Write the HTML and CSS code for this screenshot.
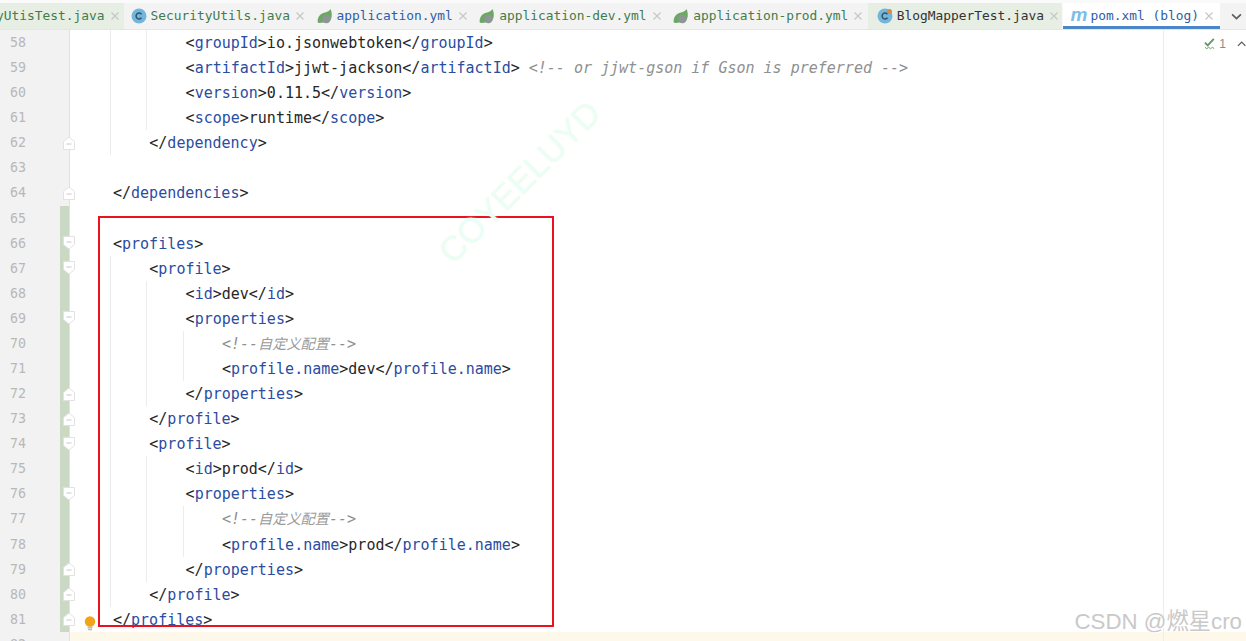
FILE: index.html
```html
<!DOCTYPE html>
<html lang="en">
<head>
<meta charset="utf-8">
<title>pom.xml (blog)</title>
<link rel="stylesheet" href="styles.css">
</head>
<body>
<svg class="defs" aria-hidden="true">
  <symbol id="close" viewBox="0 0 8 8"><path d="M.5.5l7 7M7.5.5l-7 7" fill="none" stroke="#c4c6c4" stroke-width="1.1"/></symbol>
  <symbol id="spring" viewBox="0 0 16 16"><path d="M.8 14.800C0 9.500 3 5.500 8 4.500c2.500-.5 4.500-1.500 5.500-3.500 1.500 3.500 1.800 7 .5 10-1 2.500-4 4-7 3.500-2.500.3-4.500.6-6.200.3z" fill="#6ea765"/><circle cx="9.500" cy="11" r="4.200" fill="#8e9596"/></symbol>
  <symbol id="cls" viewBox="0 0 16 16"><circle cx="8" cy="8" r="7.500" fill="#72b6dc"/><path d="M10.500 6.200A3 3 0 1 0 10.500 9.800" fill="none" stroke="#33526a" stroke-width="1.500"/></symbol>
  <symbol id="fold-start" viewBox="0 0 12 14"><path d="M.5.500h11v8L6 13 .5 8.500z" fill="#fff" stroke="#e2e2e2"/><path d="M3.500 6h5" stroke="#c8c8c8"/></symbol>
  <symbol id="fold-end" viewBox="0 0 12 14"><path d="M.5 13.500h11v-8L6 1 .5 5.500z" fill="#fff" stroke="#e2e2e2"/><path d="M3.500 8h5" stroke="#c8c8c8"/></symbol>
</svg>

<div class="tabbar">
  <div class="tab tab-seen tab-first"><span class="label green clip">yUtisTest.java</span><svg class="x"><use href="#close"/></svg></div>
  <div class="tab"><svg class="ico"><use href="#cls"/></svg><span class="label green">SecurityUtils.java</span><svg class="x"><use href="#close"/></svg></div>
  <div class="tab"><svg class="ico"><use href="#spring"/></svg><span class="label blue">application.yml</span><svg class="x"><use href="#close"/></svg></div>
  <div class="tab"><svg class="ico"><use href="#spring"/></svg><span class="label green">application-dev.yml</span><svg class="x"><use href="#close"/></svg></div>
  <div class="tab"><svg class="ico"><use href="#spring"/></svg><span class="label green">application-prod.yml</span><svg class="x"><use href="#close"/></svg></div>
  <div class="tab tab-seen tab-blog"><span class="ico-wrap"><svg class="ico"><use href="#cls"/></svg><span class="dot"></span></span><span class="label dark">BlogMapperTest.java</span><svg class="x"><use href="#close"/></svg></div>
  <div class="tab tab-active"><span class="m-ico">m</span><span class="label blue">pom.xml (blog)</span><svg class="x"><use href="#close"/></svg></div>
  <div class="tab-more"><svg class="chev" viewBox="0 0 10 6"><path d="M1 1l4 4 4-4" fill="none" stroke="#5c5c5c" stroke-width="1.500"/></svg></div>
</div>

<div class="editor">
  <div class="lines">
    <div class="row"><div class="gutter"><span class="num">58</span><span class="strip"></span></div><div class="code"><span class="ind g"></span><span class="ind g"></span><span class="txt">&lt;<b>groupId</b>&gt;io.jsonwebtoken&lt;/<b>groupId</b>&gt;</span></div></div>
    <div class="row"><div class="gutter"><span class="num">59</span><span class="strip"></span></div><div class="code"><span class="ind g"></span><span class="ind g"></span><span class="txt">&lt;<b>artifactId</b>&gt;jjwt-jackson&lt;/<b>artifactId</b>&gt; <i>&lt;!-- or jjwt-gson if Gson is preferred --&gt;</i></span></div></div>
    <div class="row"><div class="gutter"><span class="num">60</span><span class="strip"></span></div><div class="code"><span class="ind g"></span><span class="ind g"></span><span class="txt">&lt;<b>version</b>&gt;0.11.5&lt;/<b>version</b>&gt;</span></div></div>
    <div class="row"><div class="gutter"><span class="num">61</span><span class="strip"></span></div><div class="code"><span class="ind g"></span><span class="ind g"></span><span class="txt">&lt;<b>scope</b>&gt;runtime&lt;/<b>scope</b>&gt;</span></div></div>
    <div class="row"><div class="gutter"><span class="num">62</span><span class="strip"><svg class="fold"><use href="#fold-end"/></svg></span></div><div class="code"><span class="ind g"></span><span class="txt">&lt;/<b>dependency</b>&gt;</span></div></div>
    <div class="row"><div class="gutter"><span class="num">63</span><span class="strip"></span></div><div class="code"></div></div>
    <div class="row"><div class="gutter"><span class="num">64</span><span class="strip"><svg class="fold"><use href="#fold-end"/></svg></span></div><div class="code"><span class="txt">&lt;/<b>dependencies</b>&gt;</span></div></div>
    <div class="row"><div class="gutter"><span class="num">65</span><span class="strip changed"></span></div><div class="code"></div></div>
    <div class="row"><div class="gutter"><span class="num">66</span><span class="strip changed"><svg class="fold"><use href="#fold-start"/></svg></span></div><div class="code"><span class="txt">&lt;<b>profiles</b>&gt;</span></div></div>
    <div class="row"><div class="gutter"><span class="num">67</span><span class="strip changed"><svg class="fold"><use href="#fold-start"/></svg></span></div><div class="code"><span class="ind g"></span><span class="txt">&lt;<b>profile</b>&gt;</span></div></div>
    <div class="row"><div class="gutter"><span class="num">68</span><span class="strip changed"></span></div><div class="code"><span class="ind g"></span><span class="ind g"></span><span class="txt">&lt;<b>id</b>&gt;dev&lt;/<b>id</b>&gt;</span></div></div>
    <div class="row"><div class="gutter"><span class="num">69</span><span class="strip changed"><svg class="fold"><use href="#fold-start"/></svg></span></div><div class="code"><span class="ind g"></span><span class="ind g"></span><span class="txt">&lt;<b>properties</b>&gt;</span></div></div>
    <div class="row"><div class="gutter"><span class="num">70</span><span class="strip changed"></span></div><div class="code"><span class="ind g"></span><span class="ind g"></span><span class="ind g"></span><span class="txt"><i>&lt;!--<span class="cjk">自定义配置</span>--&gt;</i></span></div></div>
    <div class="row"><div class="gutter"><span class="num">71</span><span class="strip changed"></span></div><div class="code"><span class="ind g"></span><span class="ind g"></span><span class="ind g"></span><span class="txt">&lt;<b>profile.name</b>&gt;dev&lt;/<b>profile.name</b>&gt;</span></div></div>
    <div class="row"><div class="gutter"><span class="num">72</span><span class="strip changed"><svg class="fold"><use href="#fold-end"/></svg></span></div><div class="code"><span class="ind g"></span><span class="ind g"></span><span class="txt">&lt;/<b>properties</b>&gt;</span></div></div>
    <div class="row"><div class="gutter"><span class="num">73</span><span class="strip changed"><svg class="fold"><use href="#fold-end"/></svg></span></div><div class="code"><span class="ind g"></span><span class="txt">&lt;/<b>profile</b>&gt;</span></div></div>
    <div class="row"><div class="gutter"><span class="num">74</span><span class="strip changed"><svg class="fold"><use href="#fold-start"/></svg></span></div><div class="code"><span class="ind g"></span><span class="txt">&lt;<b>profile</b>&gt;</span></div></div>
    <div class="row"><div class="gutter"><span class="num">75</span><span class="strip changed"></span></div><div class="code"><span class="ind g"></span><span class="ind g"></span><span class="txt">&lt;<b>id</b>&gt;prod&lt;/<b>id</b>&gt;</span></div></div>
    <div class="row"><div class="gutter"><span class="num">76</span><span class="strip changed"><svg class="fold"><use href="#fold-start"/></svg></span></div><div class="code"><span class="ind g"></span><span class="ind g"></span><span class="txt">&lt;<b>properties</b>&gt;</span></div></div>
    <div class="row"><div class="gutter"><span class="num">77</span><span class="strip changed"></span></div><div class="code"><span class="ind g"></span><span class="ind g"></span><span class="ind g"></span><span class="txt"><i>&lt;!--<span class="cjk">自定义配置</span>--&gt;</i></span></div></div>
    <div class="row"><div class="gutter"><span class="num">78</span><span class="strip changed"></span></div><div class="code"><span class="ind g"></span><span class="ind g"></span><span class="ind g"></span><span class="txt">&lt;<b>profile.name</b>&gt;prod&lt;/<b>profile.name</b>&gt;</span></div></div>
    <div class="row"><div class="gutter"><span class="num">79</span><span class="strip changed"><svg class="fold"><use href="#fold-end"/></svg></span></div><div class="code"><span class="ind g"></span><span class="ind g"></span><span class="txt">&lt;/<b>properties</b>&gt;</span></div></div>
    <div class="row"><div class="gutter"><span class="num">80</span><span class="strip changed"><svg class="fold"><use href="#fold-end"/></svg></span></div><div class="code"><span class="ind g"></span><span class="txt">&lt;/<b>profile</b>&gt;</span></div></div>
    <div class="row"><div class="gutter"><span class="num">81</span><span class="strip changed"><svg class="fold"><use href="#fold-end"/></svg></span></div><div class="code"><span class="txt">&lt;/<b>profiles</b>&gt;</span></div></div>
    <div class="row row-current"><div class="gutter"><span class="num">82</span><span class="strip"></span></div><div class="code"></div></div>
  </div>
  <div class="stripe">
    <div class="inspect">
      <svg class="inspect-ico" viewBox="0 0 12 12"><path d="M1 4.500l3 3L10.500.5" fill="none" stroke="#5d9b62" stroke-width="2"/><path d="M1 9.500l2 1.500 2-1.500 2 1.500 2-1.500 2 1.500" fill="none" stroke="#5d9b62"/></svg>
      <span class="inspect-count">1</span>
      <svg class="inspect-up" viewBox="0 0 10 6"><path d="M1 5l4-4 4 4" fill="none" stroke="#5c5c5c" stroke-width="1.400"/></svg>
    </div>
    <div class="stripe-current"></div>
  </div>

  <div class="bulb"><svg viewBox="0 0 12 16" width="12" height="16"><circle cx="6" cy="5.500" r="5.200" fill="#f2a416"/><path d="M3.500 11.500h5M4 13.500h4" stroke="#b9b9b9" stroke-width="1.500"/></svg></div>
  <div class="red-box"></div>
  <div class="mark-cove">COYEELUYD</div>
</div>
<div class="mark-csdn">CSDN @燃星cro</div>
</body>
</html>
```

FILE: styles.css
```css
* { box-sizing: border-box; }

html, body {
  margin: 0;
  width: 1246px;
  height: 641px;
  overflow: hidden;
  background: #fff;
}

body {
  position: relative;
  font-family: "DejaVu Sans Mono", "Noto Sans CJK SC", monospace;
}

.defs { display: none; }

.tabbar {
  display: flex;
  height: 30px;
  padding-top: 3px;
  background: #fafafa;
  border-bottom: 1px solid #e6e6e6;
  overflow: hidden;
}

.tab {
  display: flex;
  flex: none;
  align-items: center;
  height: 26px;
  padding: 0 5.500px 0 7px;
  background: #f3f3f3;
}

.tab-seen { background: #e7eee3; }

.tab-first { padding: 0 5px 0 0; }

.tab-blog { padding: 0 4.500px 0 9px; }

.tab-active {
  height: 26px;
  padding-right: 7px;
  background: #fff;
  box-shadow: inset 0 -3px 0 #4a86c8;
  margin-left: 1px;
}

.tab-more {
  display: flex;
  flex: 1;
  align-items: center;
  justify-content: flex-end;
  height: 26px;
  padding-right: 4px;
  background: #f3f3f3;
}

.chev { width: 11px; height: 7px; }

.label {
  margin-top: -2px;
  font-size: 12.880px;
  white-space: pre;
  letter-spacing: 0;
}

.clip { margin-left: -4px; }

.green { color: #3f7d4c; }
.blue { color: #2f5da6; }
.dark { color: #333; }

.ico {
  flex: none;
  width: 16px;
  height: 16px;
  margin-top: -1px;
  margin-right: 4px;
}

.ico-wrap {
  position: relative;
  display: flex;
  flex: none;
}

.dot {
  position: absolute;
  top: 0;
  left: 10px;
  width: 5px;
  height: 5px;
  border-radius: 50%;
  background: #d98a4a;
}

.m-ico {
  flex: none;
  width: 20px;
  margin-top: -3px;
  font: italic bold 19px/20px "Liberation Sans", sans-serif;
  color: #7cbde8;
}

.x {
  flex: none;
  width: 8px;
  height: 8px;
  margin-left: 6px;
  margin-top: -1px;
}

.editor {
  position: relative;
  display: flex;
  height: 611px;
  overflow: hidden;
}

.lines {
  flex: 1;
  min-width: 0;
}

.row {
  display: flex;
  height: 25.09px;
  font-size: 15px;
  line-height: 25.09px;
}

.gutter {
  display: flex;
  flex: none;
  width: 70px;
  background: #f2f2f2;
  border-right: 1px solid #e2e2e2;
}

.num {
  flex: none;
  width: 60px;
  padding-right: 34px;
  font-size: 13.300px;
  text-align: right;
  color: #b8b8b8;
}

.strip {
  display: flex;
  flex: none;
  align-items: center;
  width: 9px;
}

.changed { background: #c9d9c3; }

.fold {
  flex: none;
  width: 12px;
  height: 14px;
  margin-left: 3px;
  overflow: visible;
}

.code {
  display: flex;
  flex: 1;
  min-width: 0;
  height: 100%;
  padding-left: 40px;
  white-space: pre;
  color: #262626;
}

.ind {
  flex: none;
  width: 36.300px;
  height: 100%;
  border-left: 1px solid transparent;
}

.ind.g { border-left-color: #ececec; }

.txt {
  margin-left: 3px;
  padding-top: 1px;
}

.txt b {
  font-weight: normal;
  color: #2b4c9f;
}

.txt i {
  font-style: italic;
  color: #8f8f8f;
}

.cjk {
  font-family: "Noto Sans CJK SC", sans-serif;
  font-size: 14.200px;
  line-height: 1;
  color: #9a9a9a;
}

.row-current .code { background: #fdf8ea; }

.stripe {
  display: flex;
  flex: none;
  flex-direction: column;
  justify-content: space-between;
  width: 83px;
  border-left: 1px solid #ececec;
}

.inspect {
  display: flex;
  align-items: center;
  height: 28px;
  padding-left: 40px;
}

.inspect-ico { width: 12px; height: 12px; }

.inspect-count {
  width: 8px;
  margin-left: 4px;
  font: 12px/1 "Liberation Sans", sans-serif;
  color: #8a8a8a;
}

.inspect-up {
  width: 10px;
  height: 6px;
  margin-left: 10px;
}

.stripe-current {
  height: 9px;
  background: #fdf8ea;
}

.bulb {
  position: absolute;
  left: 84px;
  top: 586px;
  line-height: 0;
}

.red-box {
  position: absolute;
  left: 98px;
  top: 186px;
  width: 456px;
  height: 411px;
  border: 2px solid #e8131f;
}

.mark-cove {
  position: absolute;
  left: 394px;
  top: 135px;
  width: 250px;
  font: 34.400px/34px "Liberation Sans", sans-serif;
  text-align: center;
  white-space: nowrap;
  color: #e9fdfa;
  text-shadow: 0 0 2px #fdfdd8;
  transform: rotate(-45deg);
}

.mark-csdn {
  position: absolute;
  right: 4px;
  bottom: 6px;
  font: 22.300px/26px "Liberation Sans", "Noto Sans CJK SC", sans-serif;
  white-space: nowrap;
  color: #c9c9c9;
  text-shadow: 1px 1px 0 #fff;
}
```
